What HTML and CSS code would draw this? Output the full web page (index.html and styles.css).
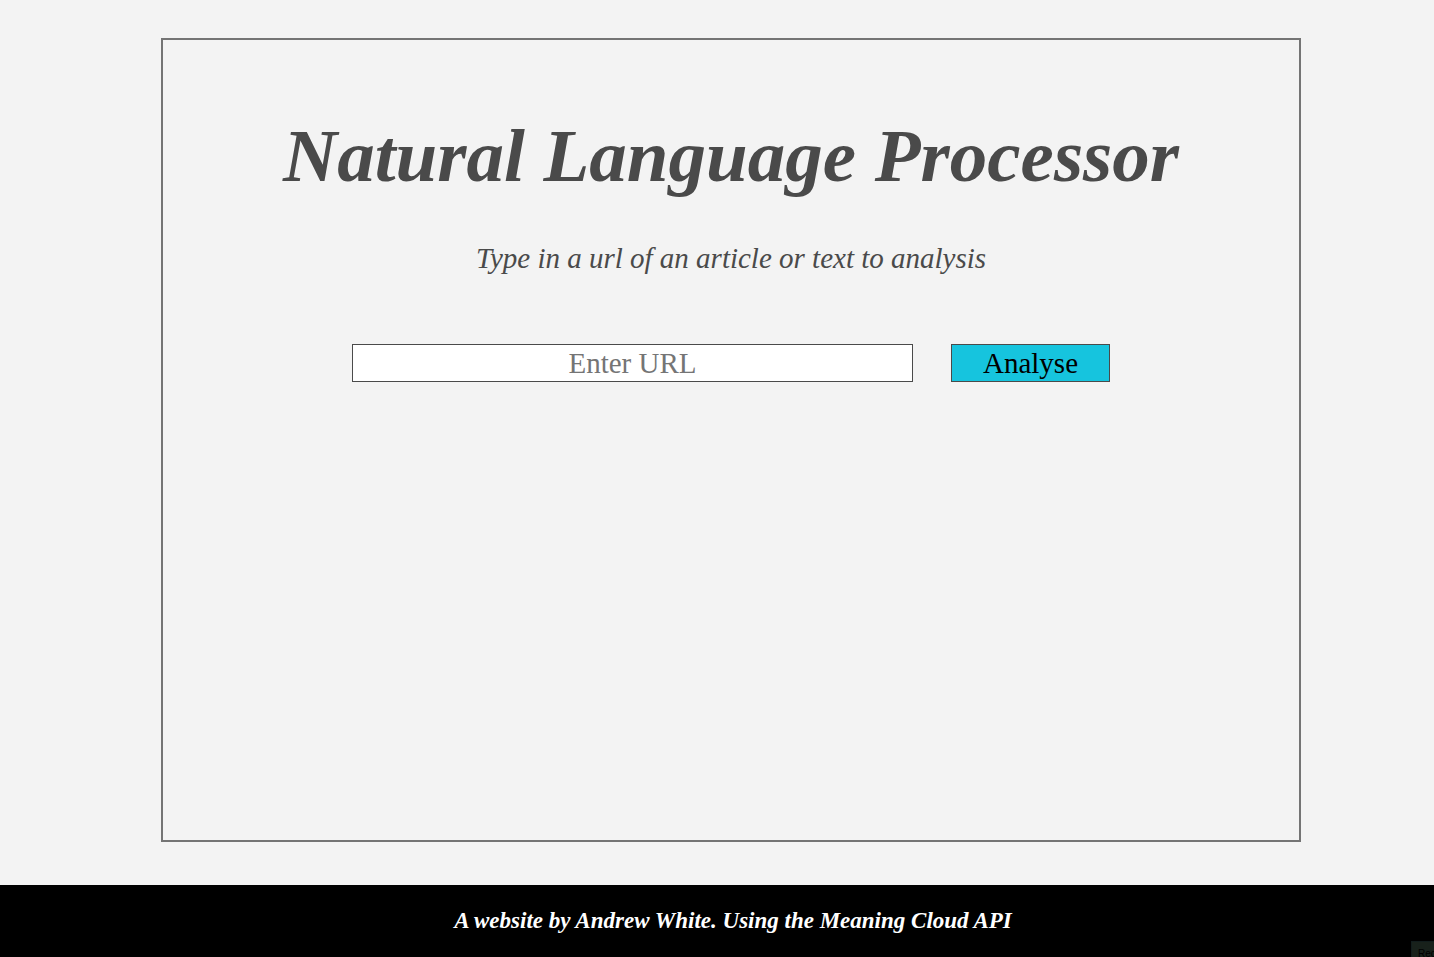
FILE: index.html
```html
<!DOCTYPE html>
<html lang="en">
<head>
<meta charset="utf-8">
<title>Natural Language Processor</title>
<link rel="stylesheet" href="styles.css">
</head>
<body>
<main class="main">
  <section class="panel">
    <h1 class="title">Natural Language Processor</h1>
    <p class="subtitle">Type in a url of an article or text to analysis</p>
    <form class="form">
      <input class="field" type="text" placeholder="Enter URL" aria-label="Enter URL">
      <button class="button" type="button">Analyse</button>
    </form>
  </section>
</main>
<footer class="footer">
  <p class="credit">A website by Andrew White. Using the Meaning Cloud API</p>
  <span class="badge">Rec</span>
</footer>
</body>
</html>
```
FILE: styles.css
```css
* {
  box-sizing: border-box;
}

body {
  display: flex;
  flex-direction: column;
  min-height: 100vh;
  margin: 0;
  background: #f3f3f3;
  color: #4a4a4a;
  font-family: "Liberation Serif", serif;
}

.main {
  display: flex;
  flex: 1;
  padding: 38px 133px 43px 161px;
}

.panel {
  flex: 1;
  padding: 48px 24px;
  border: 2px solid #747474;
  text-align: center;
}

.title {
  margin: 0 0 8px;
  font-size: 75px;
  font-style: italic;
  font-weight: 700;
  line-height: 136px;
}

.subtitle {
  margin: 0;
  font-size: 29px;
  font-style: italic;
  line-height: 52px;
}

.form {
  display: flex;
  justify-content: center;
  gap: 38px;
  margin-top: 60px;
}

.field,
.button {
  height: 38px;
  padding: 0;
  border: 1px solid #4a4a4a;
  border-radius: 0;
  font-family: inherit;
  font-size: 29px;
  text-align: center;
}

.field {
  flex: 0 1 561px;
  min-width: 0;
  background: #fff;
}

.field::placeholder {
  color: #757575;
}

.button {
  flex: 0 0 159px;
  background: #16c4de;
  color: #000;
}

.footer {
  position: relative;
  padding: 16px 0 16px 32px;
  overflow: hidden;
  background: #000;
  color: #fff;
  text-align: center;
}

.credit {
  margin: 0;
  font-size: 23px;
  font-style: italic;
  font-weight: 700;
  line-height: 40px;
}

.badge {
  position: absolute;
  right: 0;
  bottom: 0;
  width: 23px;
  height: 16px;
  padding: 6px 0 0 6px;
  overflow: hidden;
  border: solid #111c1c;
  border-width: 1px 0 0 1px;
  background: #18211b;
  color: #000;
  font: 10px/12px "Liberation Sans", sans-serif;
  text-align: left;
}
```
